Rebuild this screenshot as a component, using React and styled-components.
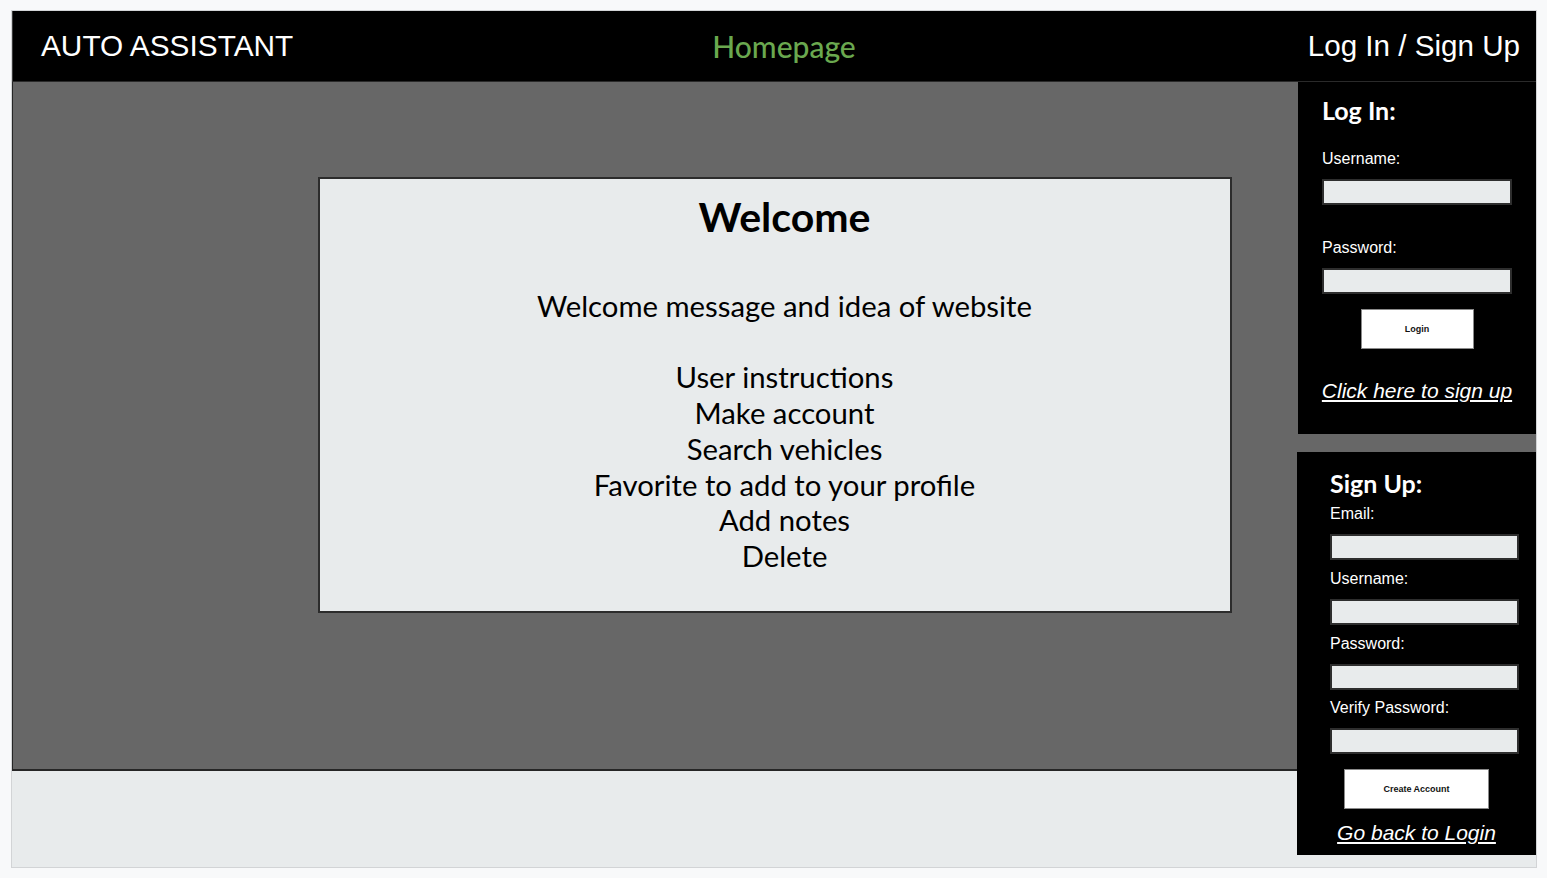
import React from "react";
import styled, { createGlobalStyle } from "styled-components";

const GlobalStyle = createGlobalStyle`
  body {
    margin: 0;
    background: #f8f9fa;
    font-family: "Liberation Sans", Arial, sans-serif;
  }
`;

const App = () => {
  return (
    <>
      <GlobalStyle />
      <Frame>
        <Header>
          <Brand>AUTO ASSISTANT</Brand>
          <NavTitle>Homepage</NavTitle>
          <AccountLink>Log In / Sign Up</AccountLink>
        </Header>
        <Body>
          <Main>
            <Card>
              <CardTitle>Welcome</CardTitle>
              <CardText>
                Welcome message and idea of website
                <br />
                <br />
                User instructions
                <br />
                Make account
                <br />
                Search vehicles
                <br />
                Favorite to add to your profile
                <br />
                Add notes
                <br />
                Delete
              </CardText>
            </Card>
          </Main>
          <Footer />
          <Aside>
            <Panel $height={352} $top={13}>
              <Fields $left={24} $right={24}>
                <PanelTitle>Log In:</PanelTitle>
                <Label $mt={25}>Username:</Label>
                <Input type="text" />
                <Label $mt={34}>Password:</Label>
                <Input type="password" />
              </Fields>
              <Button $width={113} $mt={15}>Login</Button>
              <PanelLink $mt={30}>Click here to sign up</PanelLink>
            </Panel>
            <Panel $height={403} $top={16} $shift={-1}>
              <Fields $left={33} $right={17}>
                <PanelTitle>Sign Up:</PanelTitle>
                <Label $mt={7}>Email:</Label>
                <Input type="email" />
                <Label $mt={10}>Username:</Label>
                <Input type="text" />
                <Label $mt={10}>Password:</Label>
                <Input type="password" />
                <Label $mt={9}>Verify Password:</Label>
                <Input type="password" />
              </Fields>
              <Button $width={145} $mt={15}>Create Account</Button>
              <PanelLink $mt={12}>Go back to Login</PanelLink>
            </Panel>
          </Aside>
        </Body>
      </Frame>
    </>
  );
};

const Frame = styled.div`
  margin: 10px 0 0 11px;
  width: 1526px;
  box-sizing: border-box;
  border: 1px solid #d2d4d6;
  background: #e8ebec;
`;

const Header = styled.header`
  height: 71px;
  box-sizing: border-box;
  background: #000;
  border-bottom: 1px solid #2a2a2a;
  border-left: 1px solid #3a3a3a;
  display: grid;
  grid-template-columns: 1fr auto 1fr;
  align-items: center;
  padding: 0 16px 0 28px;
  color: #fff;
`;

const Brand = styled.div`
  font-size: 29.8px;
  padding-bottom: 1px;
`;

const NavTitle = styled.div`
  font-family: Lato, sans-serif;
  font-size: 30px;
  font-weight: 500;
  color: #6aa84f;
  padding: 0 0 1px 7px;
`;

const AccountLink = styled.div`
  font-size: 29.6px;
  text-align: right;
  padding-bottom: 1px;
`;

const Body = styled.div`
  display: grid;
  grid-template-columns: 1fr 238px;
  grid-template-rows: 689px 96px;
`;

const Main = styled.main`
  grid-column: 1 / -1;
  grid-row: 1;
  background: #676767;
  border-left: 1px solid #262626;
  border-bottom: 2px solid #262626;
  padding-top: 95px;
  display: flex;
  flex-direction: column;
  align-items: center;
`;

const Footer = styled.footer`
  grid-column: 1 / -1;
  grid-row: 2;
`;

const Aside = styled.aside`
  grid-column: 2;
  grid-row: 1 / span 2;
  align-self: start;
  display: flex;
  flex-direction: column;
  gap: 18px;
  z-index: 1;
`;

const Card = styled.section`
  width: 914px;
  height: 436px;
  box-sizing: border-box;
  background: #e8ebec;
  border: 2px solid #2c2c2c;
  padding: 14px 0 0 20px;
  text-align: center;
  font-family: Lato, sans-serif;
  color: #000;
`;

const CardTitle = styled.h1`
  margin: 0;
  font-size: 41px;
  line-height: 48px;
  font-weight: 700;
`;

const CardText = styled.p`
  margin: 47px 0 0;
  font-size: 29.3px;
  line-height: 35.7px;
`;

const Panel = styled.div`
  height: ${(p) => p.$height}px;
  box-sizing: border-box;
  margin-left: ${(p) => p.$shift || 0}px;
  background: #000;
  padding-top: ${(p) => p.$top}px;
  display: flex;
  flex-direction: column;
  align-items: center;
  color: #fff;
`;

const Fields = styled.div`
  align-self: stretch;
  display: flex;
  flex-direction: column;
  padding: 0 ${(p) => p.$right}px 0 ${(p) => p.$left}px;
`;

const PanelTitle = styled.h2`
  margin: 0;
  font-family: Lato, sans-serif;
  font-size: 25px;
  line-height: 30px;
  font-weight: 700;
`;

const Label = styled.label`
  margin-top: ${(p) => p.$mt}px;
  margin-bottom: 11px;
  font-size: 16px;
  line-height: 18px;
`;

const Input = styled.input`
  height: 26px;
  box-sizing: border-box;
  margin: 0;
  padding: 0 4px;
  background: #e8ebec;
  border: 2px solid #2e2e2e;
  outline: none;
`;

const Button = styled.button`
  width: ${(p) => p.$width}px;
  height: 40px;
  margin-top: ${(p) => p.$mt}px;
  background: #fff;
  border: 1px solid #8a8a8a;
  font-family: "Liberation Sans", Arial, sans-serif;
  font-size: 9px;
  font-weight: 700;
  color: #111;
  padding: 0;
`;

const PanelLink = styled.a`
  margin-top: ${(p) => p.$mt}px;
  font-size: 21px;
  line-height: 24px;
  font-style: italic;
  text-decoration: underline;
  color: #fff;
  cursor: pointer;
`;

export default App;
